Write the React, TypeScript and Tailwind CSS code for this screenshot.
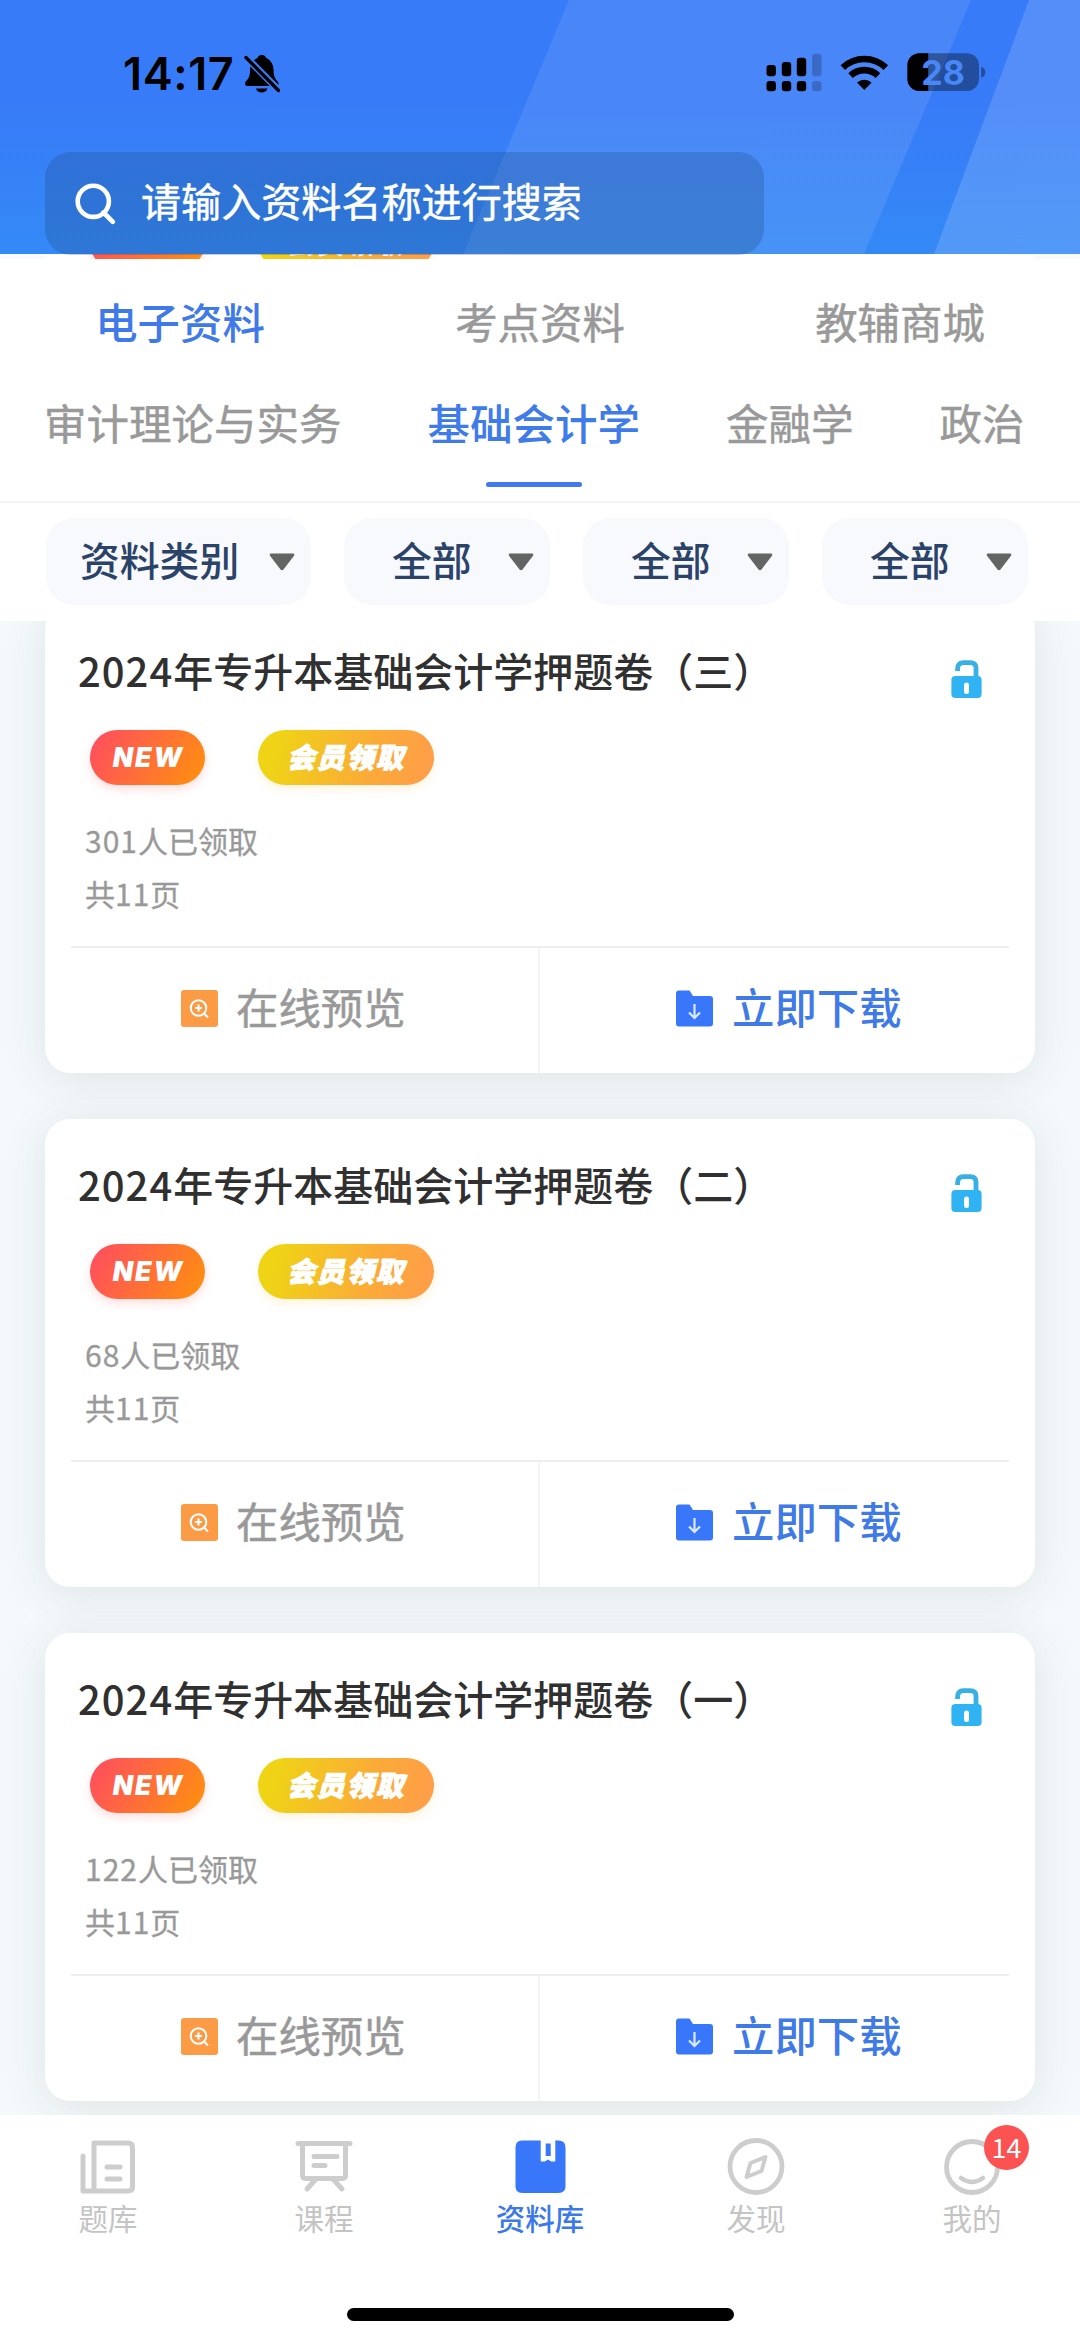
import React from 'react';
import { clsx } from 'clsx';

interface Material {
  suffix: string;
  claimed: string;
  pages: string;
}

const materials: Material[] = [
  { suffix: '三', claimed: '301', pages: '11' },
  { suffix: '二', claimed: '68', pages: '11' },
  { suffix: '一', claimed: '122', pages: '11' },
];

const categories = ['电子资料', '考点资料', '教辅商城'];
const subjects = ['审计理论与实务', '基础会计学', '金融学', '政治'];

const StatusIcons = () => (
  <svg width="222" height="42" viewBox="765 51 222 42" className="block">
    <g fill="#000">
      <rect x="766.5" y="65" width="9.4" height="11.3" rx="3" />
      <rect x="781.8" y="62" width="9.4" height="14.3" rx="3" />
      <rect x="796.8" y="57.7" width="9.4" height="18.6" rx="3" />
      <rect x="766.5" y="81" width="9.4" height="10.2" rx="3" />
      <rect x="781.8" y="81" width="9.4" height="10.2" rx="3" />
      <rect x="796.8" y="81" width="9.4" height="10.2" rx="3" />
    </g>
    <g fill="#000" opacity="0.2">
      <rect x="812.1" y="53.7" width="9.4" height="22.6" rx="3" />
      <rect x="812.1" y="81" width="9.4" height="10.2" rx="3" />
    </g>
    <g fill="none" stroke="#000" strokeWidth="6.6">
      <path d="M842.8 67.6a31 31 0 0 1 43 0" />
      <path d="M850.6 75.6a20 20 0 0 1 27.4 0" />
    </g>
    <path d="M857 82.6a11 11 0 0 1 14.6 0L864.3 90z" fill="#000" />
    <clipPath id="battery">
      <rect x="907.4" y="53.3" width="71.6" height="37.6" rx="12" />
    </clipPath>
    <g clipPath="url(#battery)">
      <rect x="907" y="53" width="72" height="38" fill="#000" opacity="0.36" />
      <rect x="907" y="53" width="21.2" height="38" fill="#000" />
    </g>
    <path d="M981.2 66.8q4 1.2 4 5.5t-4 5.5z" fill="#000" opacity="0.38" />
    <text x="943" y="84.8" textAnchor="middle" fontSize="34" fontWeight="700" fontFamily="Inter, sans-serif" fill="#4788f6">
      28
    </text>
  </svg>
);

const MutedBell = () => (
  <svg width="36" height="40" viewBox="0 0 36 40" className="block">
    <path
      d="M17.8 1c-2.2 0-3.8 1.3-4.4 3C8 6.4 6 11.5 6 17c0 5-1.5 7.5-3.5 9.8C.5 29 .3 32 3.500 32h28.600c2.600 0 3.200-2.800 1.400-4.800C31 24.500 29.600 22 29.600 17c0-5.500-2-10.600-7.400-13-.6-1.700-2.200-3-4.400-3z"
      fill="#000"
    />
    <path d="M12 34.500h11.500c-.6 2.600-3 4-5.800 4s-5.200-1.400-5.700-4z" fill="#000" />
    <path d="M2 3 35.500 37" stroke="#3a7cf6" strokeWidth="7" />
    <path d="M2 3.500 34.500 36.500" stroke="#000" strokeWidth="3.400" strokeLinecap="round" />
  </svg>
);

const Header = () => (
  <header className="relative h-[254px] bg-gradient-to-b from-[#387bf8] from-40% to-[#3489f6]">
    <svg className="absolute inset-0" width="1080" height="254" viewBox="0 0 1080 254">
      <path d="M569 0H971L864 254H463z" fill="#fff" opacity="0.09" />
      <path d="M1029 0H1080V254H934z" fill="#fff" opacity="0.15" />
    </svg>
    <div className="relative flex h-[152px] items-start justify-between pt-[51px] pr-[93px] pl-[123px]">
      <div className="flex items-center pt-[2px]">
        <span className="w-[121px] font-['Inter'] text-[45px] leading-[42px] font-semibold tracking-[0.6px] whitespace-nowrap text-black">
          14:17
        </span>
        <MutedBell />
      </div>
      <StatusIcons />
    </div>
    <div className="relative ml-[45px] flex h-[103px] w-[719px] items-center rounded-[26px] bg-[#1a4478]/25 pl-[30px]">
      <svg width="42" height="42" viewBox="0 0 42 42" fill="none" stroke="#fff" strokeWidth="4.600">
        <circle cx="18.300" cy="18.300" r="15.600" />
        <path d="m28.500 29.500 9.300 9.300" strokeLinecap="round" />
      </svg>
      <span className="-mt-[8px] ml-[24px] text-[40.1px] leading-[42px] text-white [-webkit-text-stroke:0.5px]">
        请输入资料名称进行搜索
      </span>
    </div>
  </header>
);

const Badges = () => (
  <div className="flex gap-[53px] leading-none text-white italic">
    <span className="flex h-[55px] w-[115px] items-center justify-center rounded-full bg-linear-[120deg] from-[#ff4b62] to-[#ff920c] pl-[2px] font-['Inter'] text-[26.5px] font-black tracking-[2px] shadow-[0_4px_10px_rgba(255,80,80,0.2)]">
      NEW
    </span>
    <span className="flex h-[55px] w-[176px] items-center justify-center rounded-full bg-linear-[105deg] from-[#efd415] from-10% via-[#fbaa38] via-65% to-[#ff9c4a] pb-[3px] text-[28px] font-black tracking-[1.5px] shadow-[0_4px_10px_rgba(255,190,60,0.18)] [-webkit-text-stroke:1px]">
      会员领取
    </span>
  </div>
);

const OpenLock = () => (
  <svg width="31" height="39" viewBox="0 0 31 39" className="block">
    <path d="M6.600 11V8.500Q6.600 2.600 12.500 2.600h6.800q5.700 0 5.700 5.700V19" fill="none" stroke="#38b0e4" strokeWidth="4.800" />
    <rect x="0.400" y="16" width="30.200" height="22" rx="4" fill="#2fb3f2" />
    <rect x="13" y="22.500" width="5" height="11.500" rx="2.500" fill="#fff" />
  </svg>
);

const PreviewIcon = () => (
  <svg width="37" height="37" viewBox="0 0 37 37">
    <rect width="37" height="37" rx="3" fill="#fb9b46" />
    <g fill="none" stroke="#fff" strokeWidth="2">
      <circle cx="17.500" cy="18" r="7.800" />
      <path d="M23 23.500 27 27.500M17.500 14.500v7M14 18h7" />
    </g>
  </svg>
);

const DownloadIcon = () => (
  <svg width="37" height="37" viewBox="0 0 37 37">
    <path d="M3 .5h10.500L17 6h17q3 0 3 3v24.500q0 3-3 3H3q-3 0-3-3v-30q0-3 3-3z" fill="#3877fa" />
    <path d="M18.500 14v13M13 22.500l5.500 5.500 5.500-5.500" fill="none" stroke="#dbe8ff" strokeWidth="2.200" />
  </svg>
);

const MaterialCard: React.FC<{ item: Material }> = ({ item }) => (
  <article className="flex h-[468px] shrink-0 flex-col rounded-[25px] bg-white shadow-[0_6px_44px_rgba(70,70,60,0.12)]">
    <div className="flex items-start justify-between pt-[35px] pr-[53px] pl-[33px]">
      <h2 className="text-[40px] leading-[60px] font-medium text-[#303030]">
        <span className="tracking-[1px]">2024</span>年专升本基础会计学押题卷（{item.suffix}）
      </h2>
      <div className="pt-[20px]">
        <OpenLock />
      </div>
    </div>
    <div className="mt-[30px] pl-[45px]">
      <Badges />
    </div>
    <div className="mt-[29px] pl-[40px] text-[30px] leading-[52.5px] text-[#999] [-webkit-text-stroke:0.3px]">
      <p>
        <span className="tracking-[1px]">{item.claimed}</span>人已领取
      </p>
      <p>
        共<span className="tracking-[1px]">{item.pages}</span>页
      </p>
    </div>
    <div className="mx-[26px] mt-[27px] h-[2px] bg-[#eeeeee]" />
    <div className="grid flex-1 grid-cols-2 text-[42.4px]">
      <button className="flex items-center gap-[18px] border-r-2 border-[#f4f4f4] pb-[5px] pl-[136px] text-[#999] [-webkit-text-stroke:0.5px]">
        <PreviewIcon />
        <span className="-mt-[5px]">在线预览</span>
      </button>
      <button className="flex items-center gap-[19px] pb-[5px] pl-[136px] font-medium text-[#3f7ae6]">
        <DownloadIcon />
        <span className="-mt-[5px]">立即下载</span>
      </button>
    </div>
  </article>
);

const FilterButton: React.FC<{ label: string; wide?: boolean }> = ({ label, wide }) => (
  <button
    className={clsx(
      'flex h-[87px] items-center justify-between rounded-[28px] bg-[#f7f9fc] pr-[16px] text-[39.8px] font-medium text-[#2b4269]',
      wide ? 'w-[265px] pl-[34px]' : 'w-[206px] pl-[48px]'
    )}
  >
    <span className="-mt-[6px]">{label}</span>
    <svg width="26" height="18" viewBox="0 0 26 18">
      <path d="M2 .5h22q2 .3 1 2.200L14.500 16.500q-1.500 1.500-3 0L1 2.700Q0 .8 2 .5z" fill="#636565" />
    </svg>
  </button>
);

const navItems = [
  {
    label: '题库',
    icon: (
      <g fill="none" stroke="#cdcdcd" strokeWidth="5" strokeLinecap="round" strokeLinejoin="round">
        <path d="M16 6h34q4.500 0 4.500 4v40q0 4-4.500 4H5V19M16 6v48M29 30h13M29 42h13" />
      </g>
    ),
  },
  {
    label: '课程',
    icon: (
      <g fill="none" stroke="#cdcdcd" strokeWidth="5" strokeLinecap="round" strokeLinejoin="round">
        <path d="M4 6.500h52M8.500 7v31q0 3.500 3.500 3.500h36q3.500 0 3.500-3.500V7M20 19.500h23M20 28.500h11M22 42 13 52M39 42l9 10" />
      </g>
    ),
  },
  {
    label: '资料库',
    icon: (
      <>
        <path d="M12 3.500h36.500q7 0 7 7V49.500q0 6.500-7 6.500H12q-6.500 0-6.500-6.500V10.500q0-7 6.500-7z" fill="#3877fa" />
        <path d="M30.700 3v21.500h4l3.300-2 3.300 2h4V3z" fill="#fff" />
        <path d="M35.700 6.500h5V19h-5z" fill="#3877fa" />
      </>
    ),
  },
  {
    label: '发现',
    icon: (
      <g fill="none" stroke="#cdcdcd" strokeWidth="4.800" strokeLinejoin="round">
        <circle cx="30" cy="29.500" r="26" />
        <path d="m39.500 20-4 14-15 6 4-14z" strokeWidth="4" />
      </g>
    ),
  },
  {
    label: '我的',
    badge: '14',
    icon: (
      <g fill="none" stroke="#cdcdcd" strokeWidth="4.800" strokeLinecap="round">
        <circle cx="30" cy="30" r="25.500" />
        <path d="M19 41q11 8 22 0" strokeWidth="4.500" />
      </g>
    ),
  },
];

const BottomNav = () => (
  <nav className="flex h-[226px] flex-col items-center justify-between bg-white pt-[22px] pb-[20px]">
    <div className="grid w-full grid-cols-5">
      {navItems.map(({ label, badge, icon }) => (
        <div
          key={label}
          className={clsx(
            'relative flex flex-col items-center text-[29.5px] leading-[40px]',
            label === '资料库' ? 'font-medium text-[#3c78e8]' : 'text-[#c4c4c4]'
          )}
        >
          <svg width="60" height="60" viewBox="0 0 60 60">
            {icon}
          </svg>
          <span>{label}</span>
          {badge && (
            <span className="absolute -top-[12px] left-[120px] flex size-[45px] items-center justify-center rounded-full bg-[#fc5252] pb-[2px] text-[27px] leading-none text-white">
              {badge}
            </span>
          )}
        </div>
      ))}
    </div>
    <div className="h-[13px] w-[387px] rounded-full bg-black" />
  </nav>
);

export default function App() {
  return (
    <div className="flex h-[2341px] w-[1080px] flex-col overflow-hidden bg-white font-['Noto_Sans_CJK_SC',sans-serif]">
      <Header />
      {/* sliver of the scrolled list between the header and the tabs */}
      <div className="h-[5px] overflow-hidden bg-[#f8fbfc]">
        <div className="mx-[45px] bg-white pl-[45px]">
          <div className="-mt-[39px]">
            <Badges />
          </div>
        </div>
      </div>

      <div className="grid h-[126px] grid-cols-3 items-center pb-[3px] text-center text-[42.4px]">
        {categories.map((name, i) => (
          <span
            key={name}
            className={i === 0 ? 'font-medium text-[#3f7ae8]' : 'text-[#999] [-webkit-text-stroke:0.5px]'}
          >
            {name}
          </span>
        ))}
      </div>
      <div className="flex h-[118px] gap-[86px] border-b-2 border-[#f4f5f6] pl-[44px] text-[42.5px] leading-[73px] whitespace-nowrap">
        {subjects.map((name) => {
          const active = name === '基础会计学';
          return (
            <div
              key={name}
              className={clsx(
                'flex flex-col items-center',
                active ? 'font-medium text-[#3f7cea]' : 'text-[#999] [-webkit-text-stroke:0.5px]'
              )}
            >
              <span>{name}</span>
              {active && <i className="mt-[24px] h-[5px] w-[96px] rounded-full bg-[#4279ee]" />}
            </div>
          );
        })}
      </div>
      <div className="flex h-[118px] gap-[33px] pt-[15px] pl-[46px]">
        <FilterButton label="资料类别" wide />
        <FilterButton label="全部" />
        <FilterButton label="全部" />
        <FilterButton label="全部" />
      </div>

      <main className="h-[1494px] overflow-hidden bg-[#f4f9fc] px-[45px]">
        <div className="-mt-[16px] flex flex-col gap-[46px]">
          {materials.map((item) => (
            <MaterialCard key={item.suffix} item={item} />
          ))}
        </div>
      </main>
      <BottomNav />
    </div>
  );
}
